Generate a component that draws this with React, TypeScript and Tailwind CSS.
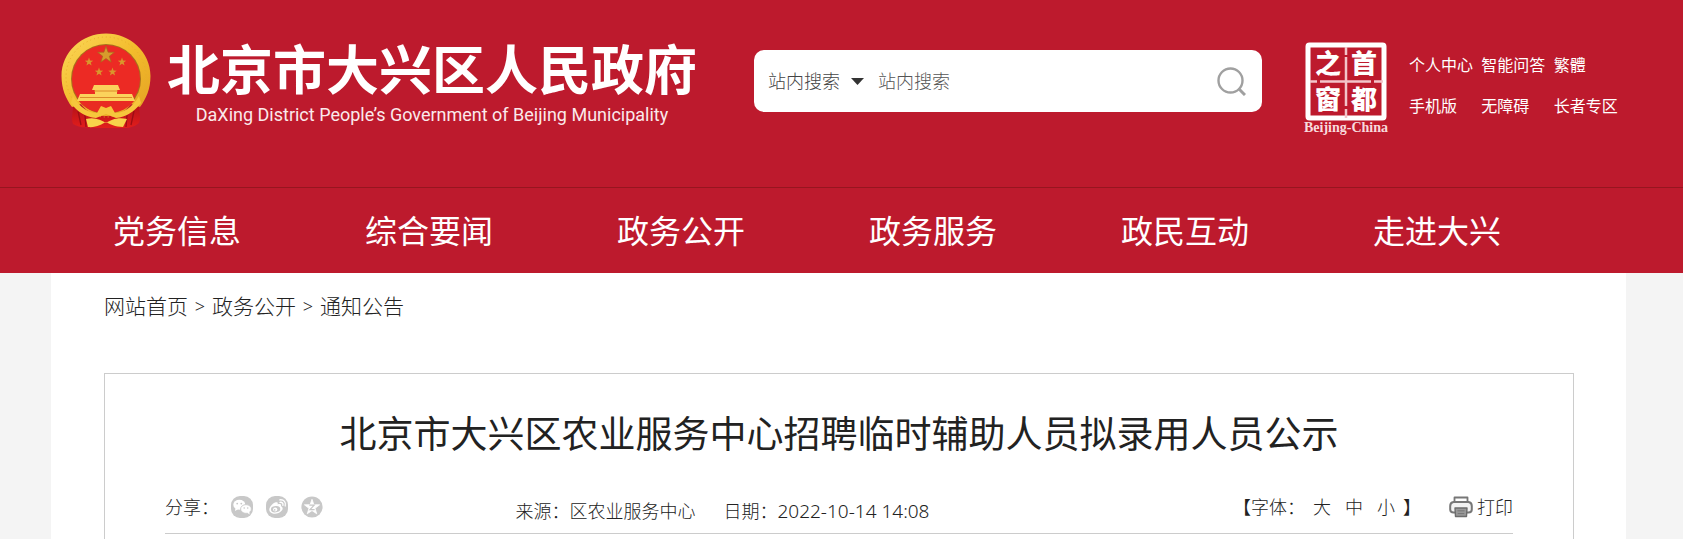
import React from "react";

const navItems = ["党务信息", "综合要闻", "政务公开", "政务服务", "政民互动", "走进大兴"];
const quickLinks = ["个人中心", "智能问答", "繁體", "手机版", "无障碍", "长者专区"];
const crumbs = ["网站首页", "政务公开", "通知公告"];

const STAR = "M0 -10 L2.4 -3.2 L9.5 -3.1 L3.8 1.3 L5.9 8.1 L0 4.1 L-5.9 8.1 L-3.8 1.3 L-9.5 -3.1 L-2.4 -3.2 Z";

function Emblem() {
  return (
    <svg viewBox="0 0 90 96" className="h-24 w-[90px] shrink-0" role="img" aria-label="国徽">
      <defs>
        <linearGradient id="gold" x1="0" y1="0" x2="1" y2="1">
          <stop offset="0" stopColor="#fbd85a" />
          <stop offset="0.5" stopColor="#f3bc2c" />
          <stop offset="1" stopColor="#e3a023" />
        </linearGradient>
        <linearGradient id="drape" x1="0" y1="0" x2="0" y2="1">
          <stop offset="0" stopColor="#a80f16" />
          <stop offset="1" stopColor="#e21d1c" />
        </linearGradient>
      </defs>
      <path d="M11 66 C14 76 9 84 12 91 C20 96 28 94 36 95 L54 95 C63 95 71 96 78 90 C81 83 76 75 79 66 L62 80 L28 80 Z" fill="url(#drape)" />
      <path d="M17 78 L20 92 M24 82 L25 94 M73 78 L70 92 M66 82 L65 94" stroke="#9c0d14" strokeWidth="1.3" fill="none" />
      <path d="M45 0.5 C69 0.5 89.5 19 89.5 43 C89.5 56 85 66 79 74 L70 71 C63 80 56 83 45 83 C34 83 27 80 20 71 L11 74 C5 66 0.5 56 0.5 43 C0.5 19 21 0.5 45 0.5 Z" fill="url(#gold)" />
      <circle cx="45" cy="44" r="40" fill="none" stroke="#e9ae2a" strokeWidth="1" strokeDasharray="1 3" />
      <circle cx="45" cy="46" r="35" fill="#a86f1c" />
      <circle cx="45" cy="46" r="34" fill="#ec2a24" />
      <path d={STAR} transform="translate(45 22) scale(0.88)" fill="#d79a2c" stroke="#a86420" strokeWidth="0.8" />
      <path d={STAR} transform="translate(28 29) scale(0.44)" fill="#d9962c" />
      <path d={STAR} transform="translate(61 29) scale(0.44)" fill="#d9962c" />
      <path d={STAR} transform="translate(38 39) scale(0.44)" fill="#d9962c" />
      <path d={STAR} transform="translate(51.5 39) scale(0.44)" fill="#d9962c" />
      <path d="M33 52 H57 L59 57 H56 V61 H71 L74 68 H16 L19 61 H34 V57 H31 Z" fill="#fbd25c" />
      <path d="M33 58 H57 M19 64.5 H71" stroke="#dd8a2a" strokeWidth="1" />
      <path d="M18 68 L73 68 C68 75 59 80 45 80 C32 80 23 75 18 68 Z" fill="#e92b22" />
      <path d="M12 63 C19 75 28 80 36 80 L40 73 L45 75 L50 73 L54 80 C62 80 71 75 78 63 L80 70 C73 79 65 84 55 85 L45 81 L35 85 C25 84 16 79 10 70 Z" fill="#f6c63c" />
      <path d="M25 86 C34 84 40 87 45 90 C50 87 56 84 66 86 L62 94 C54 94 49 91 45 89 C41 91 35 95 27 94 Z" fill="#f8d24b" />
    </svg>
  );
}

function CapitalSeal() {
  return (
    <div className="flex w-[90px] flex-col items-center gap-px">
      <svg viewBox="0 0 82 79" className="h-[79px] w-[82px]" role="img" aria-label="首都之窗">
        <rect x="3" y="3" width="76" height="73" rx="1.5" fill="none" stroke="#fff" strokeWidth="5" />
        <path d="M41 5 V13 M41 15 V64 M41 67 V76 M5 39.5 H12 M15 39.5 H66 M69 39.5 H78" stroke="#f3c5ca" strokeWidth="2.5" />
        <g fill="#fff" fontSize="26" fontWeight="900" textAnchor="middle" fontFamily="'Noto Sans CJK SC',sans-serif">
          <text x="23" y="31">之</text>
          <text x="59" y="31">首</text>
          <text x="23" y="67">窗</text>
          <text x="59" y="67">都</text>
        </g>
      </svg>
      <span className="font-['Liberation_Serif',serif] text-[14px] leading-3 font-bold text-[#f8dadd]">Beijing-China</span>
    </div>
  );
}

function WechatIcon() {
  return (
    <svg viewBox="0 0 22 22" className="size-[22px]" aria-hidden="true">
      <rect width="22" height="22" rx="9" fill="#c8c8c8" />
      <ellipse cx="8.3" cy="8.8" rx="6" ry="5" fill="#fff" />
      <path d="M4.5 12 L4 15 L7.5 13 Z" fill="#fff" />
      <ellipse cx="15" cy="13" rx="5.4" ry="4.4" fill="#fff" stroke="#c8c8c8" strokeWidth="0.9" />
      <path d="M16 16.5 L18.6 18.4 L18.3 15.5 Z" fill="#fff" />
      <g fill="#c8c8c8">
        <circle cx="6.2" cy="7.6" r="0.9" />
        <circle cx="10.3" cy="7.6" r="0.9" />
        <circle cx="13.2" cy="12" r="0.8" />
        <circle cx="16.7" cy="12" r="0.8" />
      </g>
    </svg>
  );
}

function WeiboIcon() {
  return (
    <svg viewBox="0 0 22 22" className="size-[22px]" aria-hidden="true">
      <rect width="22" height="22" rx="9" fill="#c8c8c8" />
      <path d="M9 6.6 C11.2 5.6 12.2 6.6 11.6 8.4 C14 7.5 15.6 8.2 14.9 10.2 C17 10.9 17.2 13 15.6 14.8 C13.4 17.4 9.3 18.4 6 17.2 C2.6 15.9 2.6 12.6 5 9.8 C6.2 8.3 7.6 7.2 9 6.6 Z" fill="#fff" />
      <ellipse cx="9.6" cy="13.2" rx="4.7" ry="3.2" fill="#c8c8c8" transform="rotate(-8 9.6 13.2)" />
      <circle cx="9.2" cy="13.5" r="2.1" fill="#fff" />
      <circle cx="8.7" cy="13.9" r="0.8" fill="#c8c8c8" />
      <path d="M14 6.3 C16.2 6 17.4 7.5 16.9 9.4 M13.8 3.8 C17.9 3.3 20.3 6.3 19.2 10" stroke="#fff" strokeWidth="1.3" fill="none" strokeLinecap="round" />
    </svg>
  );
}

function QzoneIcon() {
  return (
    <svg viewBox="0 0 22 22" className="size-[22px]" aria-hidden="true">
      <circle cx="11" cy="11" r="10.6" fill="#c8c8c8" />
      <path d={STAR} transform="translate(11 11.3) scale(0.8)" fill="#fff" stroke="#fff" strokeWidth="1" strokeLinejoin="round" />
      <path d="M8.3 9.2 H13.2 L9 13.6 H13.6" stroke="#c8c8c8" strokeWidth="1.2" fill="none" />
    </svg>
  );
}

function PrinterIcon() {
  return (
    <svg viewBox="0 0 24 22" className="h-[22px] w-6" aria-hidden="true">
      <path d="M5.5 6 V1.5 H18.5 V6" fill="#fff" stroke="#777" strokeWidth="1.8" strokeLinejoin="round" />
      <path d="M4.5 6 H19.5 Q22.8 6.5 22.8 10 V13.5 Q22.8 16.5 19.5 16.5 H4.5 Q1.2 16.5 1.2 13.5 V10 Q1.2 6.5 4.5 6 Z" fill="#f2f2f2" stroke="#777" strokeWidth="2" />
      <path d="M6 12 H18 L17.5 20.5 H6.5 Z" fill="#999" stroke="#6c6c6c" strokeWidth="1.4" strokeLinejoin="round" />
      <path d="M8.5 14.8 H15.5 M8.7 17.6 H15.3" stroke="#777" strokeWidth="1" />
    </svg>
  );
}

export default function App() {
  return (
    <div className="flex min-h-screen flex-col bg-[#f4f4f4] font-['Noto_Sans','Noto_Sans_CJK_SC',sans-serif] text-[#222]">
      <header className="bg-[#bd1a2d] text-white">
        <div className="pr-1.5">
          <div className="mx-auto flex h-[187px] max-w-[1575px] items-start">
            <a href="#" className="flex flex-1 items-start gap-4 pt-[33px] pl-2.5">
              <Emblem />
              <span className="flex flex-col items-center pt-0.5">
                <span className="text-[53px] leading-[70px] font-bold whitespace-nowrap">北京市大兴区人民政府</span>
                <span className="font-[Roboto,sans-serif] text-[18px] leading-5 whitespace-nowrap text-[#fbe9eb]">
                  DaXing District People’s Government of Beijing Municipality
                </span>
              </span>
            </a>
            <form className="mt-[50px] flex h-[62px] w-[508px] items-center rounded-[10px] bg-white pr-4 pl-[14px] text-[18px] text-[#444]" onSubmit={(e) => e.preventDefault()}>
              <span className="flex items-center gap-2">
                <select aria-label="搜索范围" className="w-[75px] appearance-none bg-transparent font-light outline-none">
                  <option>站内搜索</option>
                </select>
                <svg viewBox="0 0 13 7" className="h-[7px] w-[13px]" aria-hidden="true">
                  <path d="M0 0 H13 L6.5 7 Z" fill="#333" />
                </svg>
              </span>
              <input type="text" aria-label="站内搜索" placeholder="站内搜索" className="ml-[14px] min-w-0 flex-1 font-light outline-none placeholder:text-[#555]" />
              <button type="submit" aria-label="搜索">
                <svg viewBox="0 0 29 29" className="size-[29px]" fill="none" stroke="#a0a0a0" strokeWidth="2.4">
                  <circle cx="13.5" cy="13.5" r="12" />
                  <path d="M21.5 21.5 L28 28" strokeWidth="3" />
                </svg>
              </button>
            </form>
            <div className="mt-[42px] ml-[39px]">
              <CapitalSeal />
            </div>
            <ul className="mt-[45px] ml-[18px] grid w-[217px] grid-cols-3 text-[16px] leading-[41px] whitespace-nowrap">
              {quickLinks.map((label) => (
                <li key={label}>
                  <a href="#">{label}</a>
                </li>
              ))}
            </ul>
          </div>
        </div>
        <nav className="border-t border-[#97151f] pr-1.5">
          <ul className="mx-auto flex max-w-[1575px] text-[32px] leading-[85px]">
            {navItems.map((label) => (
              <li key={label} className="w-[16%] text-center whitespace-nowrap">
                <a href="#">{label}</a>
              </li>
            ))}
          </ul>
        </nav>
      </header>

      <div className="flex flex-1 flex-col pr-1.5">
        <main className="mx-auto flex w-full max-w-[1575px] flex-1 flex-col bg-white pr-[52px] pl-[53px]">
          <nav aria-label="面包屑" className="flex h-[100px] items-start pt-[17px] text-[21px] leading-8 font-light">
            {crumbs.map((label, i) => (
              <React.Fragment key={label}>
                {i > 0 && <span className="w-6 text-center text-[18px]">&gt;</span>}
                <a href="#">{label}</a>
              </React.Fragment>
            ))}
          </nav>
          <article className="flex-1 border border-b-0 border-[#ccc] px-[60px] pt-8">
            <h1 className="text-center text-[37px] leading-[56px]">北京市大兴区农业服务中心招聘临时辅助人员拟录用人员公示</h1>
            <div className="mt-6 flex h-12 border-b border-[#ccc] text-[18px] leading-[42px] font-light whitespace-nowrap">
              <div className="flex w-[26%]">
                <span>分享：</span>
                <span className="ml-3 flex items-center gap-[13px] self-start pt-2.5">
                  <a href="#" aria-label="微信"><WechatIcon /></a>
                  <a href="#" aria-label="微博"><WeiboIcon /></a>
                  <a href="#" aria-label="QQ空间"><QzoneIcon /></a>
                </span>
              </div>
              <p className="flex gap-7 pt-1">
                <span>来源：区农业服务中心</span>
                <span>
                  日期：<time className="text-[19px]">2022-10-14 14:08</time>
                </span>
              </p>
              <div className="flex flex-1 items-start justify-end">
                <span>【字体：</span>
                <span className="ml-2 flex gap-[14px]">
                  <button type="button">大</button>
                  <button type="button">中</button>
                  <button type="button">小</button>
                </span>
                <span className="ml-2">】</span>
                <button type="button" className="ml-7 flex items-center gap-1">
                  <PrinterIcon />
                  打印
                </button>
              </div>
            </div>
          </article>
        </main>
      </div>
    </div>
  );
}
